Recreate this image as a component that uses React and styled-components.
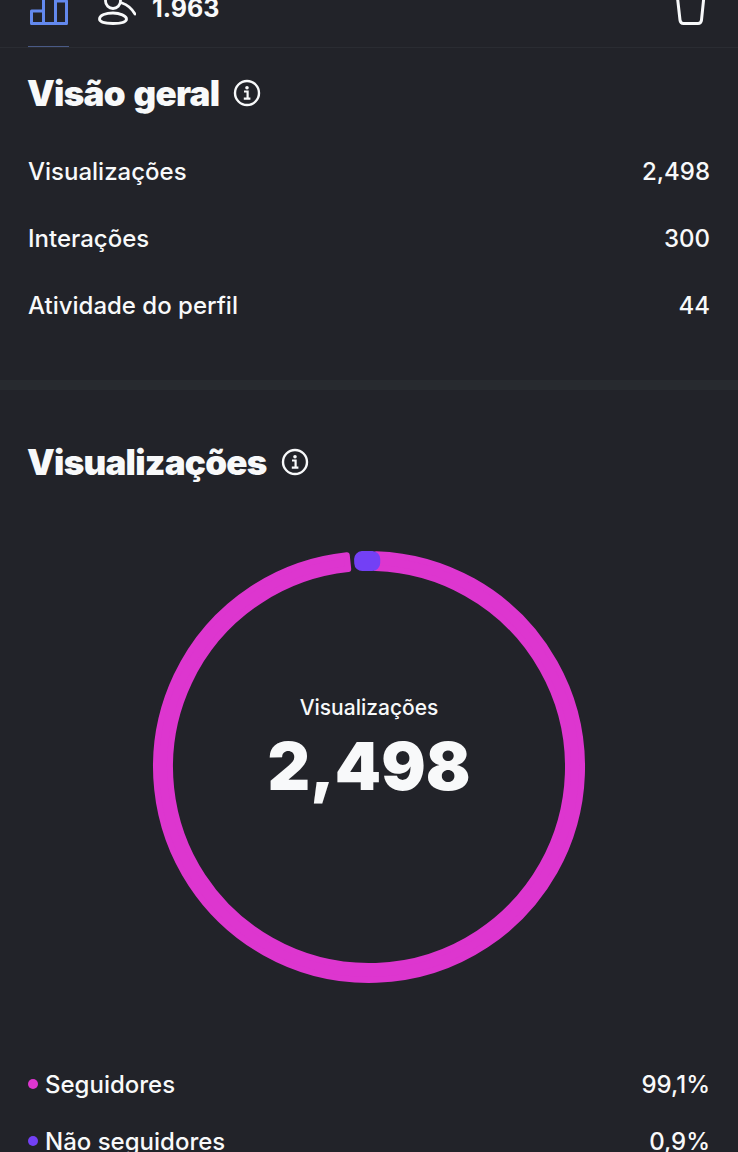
import React from 'react';
import styled, { createGlobalStyle } from 'styled-components';

const GlobalStyle = createGlobalStyle`
  html, body {
    margin: 0;
    padding: 0;
    background: #222329;
  }
`

const Page = styled('div')`
  width: 738px;
  height: 1152px;
  overflow: hidden;
  background: #222329;
  color: #f8f9fa;
  font-family: Inter, "Noto Sans", sans-serif;
`

const TabBar = styled('div')`
  height: 48px;
  box-sizing: border-box;
  border-bottom: 1px solid #2a2c32;
  display: flex;
  align-items: flex-end;
  overflow: hidden;
  padding: 0 32px 0 28px;
`

const Tab = styled('div')`
  height: 47px;
  display: flex;
  align-items: flex-end;
  padding-bottom: 22px;
  box-sizing: border-box;
  gap: 16px;
  flex-shrink: 0;
`

const ChartTab = styled(Tab)`
  width: 41px;
  justify-content: center;
  margin-right: 29px;
  box-shadow: inset 0 -1px 0 #4a5a86;
`

const FollowersTab = styled(Tab)`
  flex: 1;
`

const TabCount = styled('span')`
  font-size: 25px;
  font-weight: 700;
  line-height: 24px;
  position: relative;
  top: -5px;
`

const Section = styled('section')`
  padding: 0 28px;
`

const OverviewSection = styled(Section)`
  padding-top: 27px;
  padding-bottom: 58px;
  border-bottom: 10px solid #272a2f;
`

const TitleRow = styled('div')`
  display: flex;
  align-items: center;
  gap: 14px;
  height: 36px;
`

const Title = styled('h2')`
  margin: 0 0 0 -1px;
  font-size: 35px;
  font-weight: 900;
  letter-spacing: -0.75px;
  word-spacing: 2.6px;
  line-height: 36px;
`

const Rows = styled('div')`
  margin-top: 43px;
  display: flex;
  flex-direction: column;
  gap: 33px;
`

const Row = styled('div')`
  display: flex;
  justify-content: space-between;
  align-items: center;
  height: 34px;
  font-size: 24px;
  font-weight: 500;
`

const ViewsSection = styled(Section)`
  padding-top: 54px;
`

const RingWrap = styled('div')`
  position: relative;
  width: 436px;
  height: 436px;
  margin: 71px auto 0;
`

const RingLabel = styled('div')`
  position: absolute;
  inset: 0;
  padding-bottom: 22px;
  display: flex;
  flex-direction: column;
  align-items: center;
  justify-content: center;
`

const RingCaption = styled('span')`
  font-size: 21px;
  font-weight: 500;
  line-height: 24px;
  margin-top: -18px;
`

const RingValue = styled('span')`
  font-size: 66px;
  font-weight: 900;
  line-height: 72px;
  margin-top: 10px;
`

const Legend = styled('div')`
  margin-top: 80px;
  display: flex;
  flex-direction: column;
  gap: 23px;
`

const LegendName = styled('span')`
  display: flex;
  align-items: center;
  gap: 7px;
`

const Dot = styled('i')`
  width: 10px;
  height: 10px;
  border-radius: 50%;
  background: ${({ $color }) => $color};
`

const InfoIcon = () => (
  <svg width="28" height="28" viewBox="0 0 28 28" fill="none">
    <circle cx="14" cy="14" r="12" stroke="#f8f9fa" strokeWidth="2.4" />
    <circle cx="14" cy="8.8" r="1.8" fill="#f8f9fa" />
    <path d="M11 12.500h3.600v7M10.800 19.600h6.600" stroke="#f8f9fa" strokeWidth="2.2" />
  </svg>
)

const polar = (r, deg) => {
  const a = (deg - 90) * Math.PI / 180
  return `${(218 + r * Math.cos(a)).toFixed(2)} ${(216 + r * Math.sin(a)).toFixed(2)}`
}

// annular sector, clockwise from a to b
const sector = (rOut, rIn, a, b) => {
  const large = b - a > 180 ? 1 : 0
  return `M${polar(rOut, a)}A${rOut} ${rOut} 0 ${large} 1 ${polar(rOut, b)}L${polar(rIn, b)}A${rIn} ${rIn} 0 ${large} 0 ${polar(rIn, a)}Z`
}

const Ring = () => (
  <svg width="436" height="436" viewBox="0 0 436 436">
    <path d={sector(213, 199, 2, 354)} fill="#dd36cf" stroke="#dd36cf" strokeWidth="6" strokeLinejoin="round" />
    <path d={sector(208, 204, -1.900, 0.900)} fill="#7340f5" stroke="#7340f5" strokeWidth="16" strokeLinejoin="round" />
  </svg>
)

export default function App() {
  return (
    <Page>
      <GlobalStyle />
      <TabBar>
        <ChartTab>
          <svg width="40" height="36" viewBox="0 0 40 36" fill="none" stroke="#6389ee" strokeWidth="3" strokeLinejoin="round">
            <path d="M2.500 34.500V22h12v12.500zM14.500 34.500V3h12v31.500zM26.500 34.500V12h11v22.500z" />
          </svg>
        </ChartTab>
        <FollowersTab>
          <svg width="38" height="36" viewBox="0 0 38 36" fill="none" stroke="#f8f9fa" strokeWidth="2.8" strokeLinecap="round">
            <circle cx="15" cy="12" r="7.500" />
            <path d="M1.500 30C1.500 26 8 24 15 24s13.500 3 13.500 6-5 4.500-13.500 4.500S1.500 33 1.500 30Z" />
            <path d="M24 14c6 2 10 6 13 11" />
          </svg>
          <TabCount>1.963</TabCount>
        </FollowersTab>
        <Tab>
          <svg width="30" height="36" viewBox="0 0 30 36" fill="none" stroke="#f8f9fa" strokeWidth="3">
            <path d="M.500 0L4 31q.400 3.500 3.500 3.500h14.500q3.100 0 3.500-3.500L28.700 0" />
          </svg>
        </Tab>
      </TabBar>

      <OverviewSection>
        <TitleRow>
          <Title>Visão geral</Title>
          <InfoIcon />
        </TitleRow>
        <Rows>
          <Row><span>Visualizações</span><span>2,498</span></Row>
          <Row><span>Interações</span><span>300</span></Row>
          <Row><span>Atividade do perfil</span><span>44</span></Row>
        </Rows>
      </OverviewSection>

      <ViewsSection>
        <TitleRow>
          <Title>Visualizações</Title>
          <InfoIcon />
        </TitleRow>
        <RingWrap>
          <Ring />
          <RingLabel>
            <RingCaption>Visualizações</RingCaption>
            <RingValue>2,498</RingValue>
          </RingLabel>
        </RingWrap>
        <Legend>
          <Row>
            <LegendName><Dot $color="#dd36cf" />Seguidores</LegendName>
            <span>99,1%</span>
          </Row>
          <Row>
            <LegendName><Dot $color="#7340f5" />Não seguidores</LegendName>
            <span>0,9%</span>
          </Row>
        </Legend>
      </ViewsSection>
    </Page>
  );
}
